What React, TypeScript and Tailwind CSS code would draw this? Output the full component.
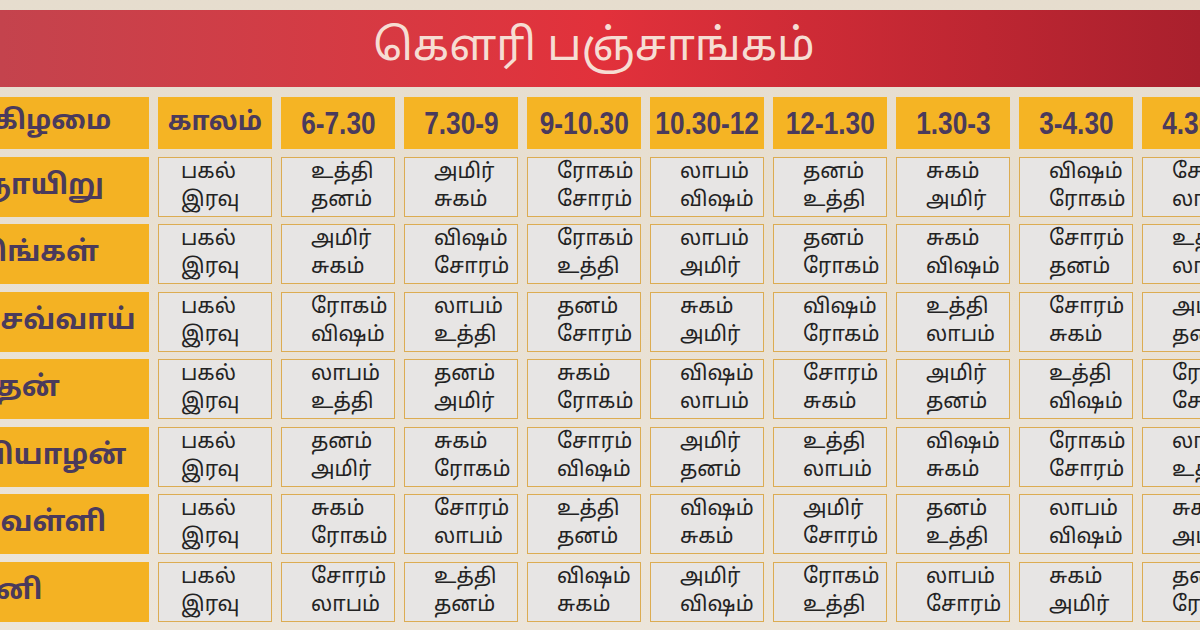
import React from "react";

const days = ["ஞாயிறு", "திங்கள்", "செவ்வாய்", "புதன்", "வியாழன்", "வெள்ளி", "சனி"];
const times = ["6-7.30", "7.30-9", "9-10.30", "10.30-12", "12-1.30", "1.30-3", "3-4.30", "4.30-6"];

const data: [string, string][][] = [
  [["உத்தி", "தனம்"], ["அமிர்", "சுகம்"], ["ரோகம்", "சோரம்"], ["லாபம்", "விஷம்"], ["தனம்", "உத்தி"], ["சுகம்", "அமிர்"], ["விஷம்", "ரோகம்"], ["சோரம்", "லாபம்"]],
  [["அமிர்", "சுகம்"], ["விஷம்", "சோரம்"], ["ரோகம்", "உத்தி"], ["லாபம்", "அமிர்"], ["தனம்", "ரோகம்"], ["சுகம்", "விஷம்"], ["சோரம்", "தனம்"], ["உத்தி", "லாபம்"]],
  [["ரோகம்", "விஷம்"], ["லாபம்", "உத்தி"], ["தனம்", "சோரம்"], ["சுகம்", "அமிர்"], ["விஷம்", "ரோகம்"], ["உத்தி", "லாபம்"], ["சோரம்", "சுகம்"], ["அமிர்", "தனம்"]],
  [["லாபம்", "உத்தி"], ["தனம்", "அமிர்"], ["சுகம்", "ரோகம்"], ["விஷம்", "லாபம்"], ["சோரம்", "சுகம்"], ["அமிர்", "தனம்"], ["உத்தி", "விஷம்"], ["ரோகம்", "சோரம்"]],
  [["தனம்", "அமிர்"], ["சுகம்", "ரோகம்"], ["சோரம்", "விஷம்"], ["அமிர்", "தனம்"], ["உத்தி", "லாபம்"], ["விஷம்", "சுகம்"], ["ரோகம்", "சோரம்"], ["லாபம்", "உத்தி"]],
  [["சுகம்", "ரோகம்"], ["சோரம்", "லாபம்"], ["உத்தி", "தனம்"], ["விஷம்", "சுகம்"], ["அமிர்", "சோரம்"], ["தனம்", "உத்தி"], ["லாபம்", "விஷம்"], ["சுகம்", "அமிர்"]],
  [["சோரம்", "லாபம்"], ["உத்தி", "தனம்"], ["விஷம்", "சுகம்"], ["அமிர்", "விஷம்"], ["ரோகம்", "உத்தி"], ["லாபம்", "சோரம்"], ["சுகம்", "அமிர்"], ["தனம்", "ரோகம்"]],
];

function Cell({ top, bottom, pad }: { top: string; bottom: string; pad: string }) {
  return (
    <div
      className={`h-[60px] bg-[#e7e5e4] border-[1.5px] border-[#dcac52] flex flex-col justify-center ${pad} text-[21px] leading-[28px] text-[#232323] font-['Noto_Sans_Tamil','Lohit_Tamil','Noto_Sans',sans-serif] whitespace-nowrap`}
    >
      <span>{top}</span>
      <span>{bottom}</span>
    </div>
  );
}

export default function App() {
  return (
    <div className="w-[1200px] h-[630px] overflow-hidden bg-gradient-to-b from-[#e6ddce] to-[#ece5da]">
      <div className="pt-[10px]">
        <div className="h-[77px] bg-gradient-to-r from-[#c4434d] via-[#e2313b] to-[#a9202d] flex items-center justify-center">
          <span className="text-[44px] leading-none text-[#f6ddd3] font-['Noto_Sans_Tamil','Lohit_Tamil','Noto_Sans',sans-serif] pr-[12px]">
            கௌரி பஞ்சாங்கம்
          </span>
        </div>
      </div>
      <div className="mt-[10px] ml-[-41px] grid grid-cols-[190px_repeat(9,114px)] gap-x-[9px] gap-y-[7.5px] w-max">
        <div className="h-[52px] bg-[#f4b223] flex items-center pl-[34px] text-[27px] font-bold text-[#4a3a5c] font-['Noto_Sans_Tamil','Lohit_Tamil','Noto_Sans',sans-serif] whitespace-nowrap">
          கிழமை
        </div>
        <div className="h-[52px] bg-[#f5b424] flex items-center justify-center text-[26px] font-bold text-[#4a3a5c] font-['Noto_Sans_Tamil','Lohit_Tamil','Noto_Sans',sans-serif]">
          காலம்
        </div>
        {times.map((t) => (
          <div
            key={t}
            className="h-[52px] bg-[#f5b424] flex items-center justify-center overflow-visible"
          >
            <span className="inline-block scale-x-[0.82] text-[32px] leading-none font-bold text-[#4a3a5c] font-['Liberation_Sans',sans-serif] whitespace-nowrap">
              {t}
            </span>
          </div>
        ))}
        {days.map((d, i) => (
          <React.Fragment key={d}>
            <div className="h-[60px] bg-[#f4b223] flex items-center pl-[14px] text-[28px] font-bold text-[#4a3a5c] font-['Noto_Sans_Tamil','Lohit_Tamil','Noto_Sans',sans-serif] whitespace-nowrap">
              {d}
            </div>
            <Cell top="பகல்" bottom="இரவு" pad="pl-[22px]" />
            {data[i].map(([a, b], j) => (
              <Cell key={j} top={a} bottom={b} pad="pl-[29px]" />
            ))}
          </React.Fragment>
        ))}
      </div>
    </div>
  );
}
